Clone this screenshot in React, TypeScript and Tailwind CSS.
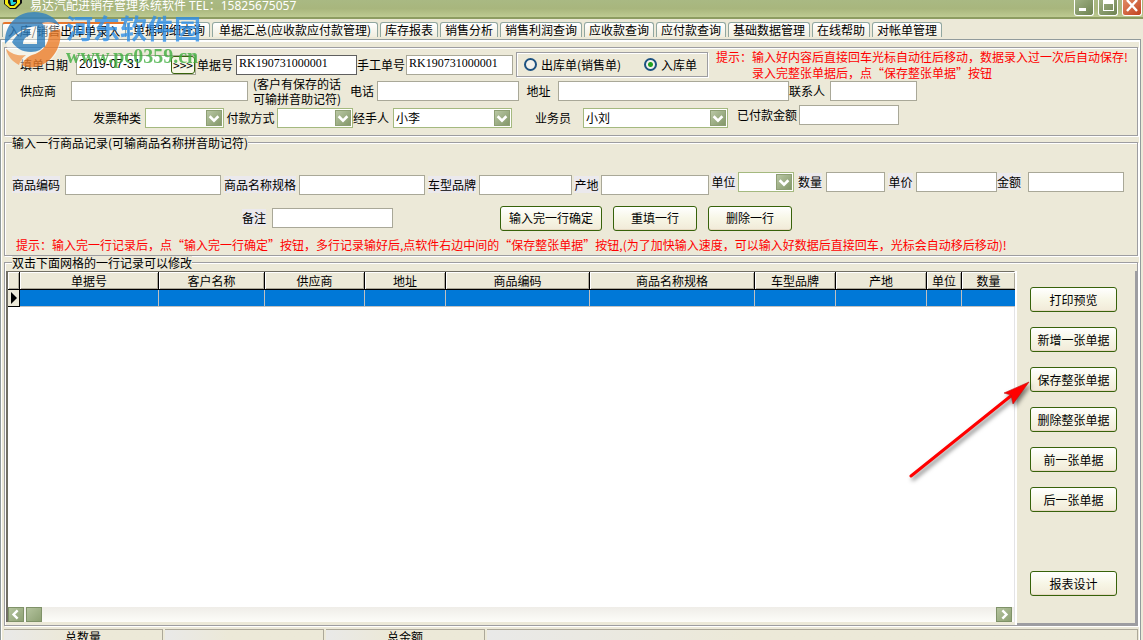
import React from 'react';
import clsx from 'clsx';

const TABS = [
    { name: '入库/销售出库单录入', width: 'w-[124px]' },
    { name: '单据明细查询', width: 'w-[82px]' },
    { name: '单据汇总(应收款应付款管理)', width: 'w-[166px]' },
    { name: '库存报表', width: 'w-[58px]' },
    { name: '销售分析', width: 'w-[58px]' },
    { name: '销售利润查询', width: 'w-[82px]' },
    { name: '应收款查询', width: 'w-[70px]' },
    { name: '应付款查询', width: 'w-[70px]' },
    { name: '基础数据管理', width: 'w-[82px]' },
    { name: '在线帮助', width: 'w-[58px]' },
    { name: '对帐单管理', width: 'w-[70px]' },
];

const COLUMNS = [
    { name: '单据号', width: 'w-[139px]' },
    { name: '客户名称', width: 'w-[106px]' },
    { name: '供应商', width: 'w-[100px]' },
    { name: '地址', width: 'w-[81px]' },
    { name: '商品编码', width: 'w-[144px]' },
    { name: '商品名称规格', width: 'w-[165px]' },
    { name: '车型品牌', width: 'w-[81px]' },
    { name: '产地', width: 'w-[91px]' },
    { name: '单位', width: 'w-[35px]' },
    { name: '数量', width: 'w-[53px]' },
];

const ACTIONS = ['打印预览', '新增一张单据', '保存整张单据', '删除整张单据', '前一张单据', '后一张单据'];

const ETCHED = 'border border-[#9d9da1] shadow-[1px_1px_0_#fff,inset_1px_1px_0_#fff]';

interface LabelProps {
    htmlFor: string;
    children: React.ReactNode;
    className?: string;
    tinted?: boolean;
}

function Label({ htmlFor, children, className, tinted }: LabelProps) {
    return (
        <label htmlFor={htmlFor} className={clsx('h-5 leading-5', className)}>
            <span className={clsx(tinted && 'bg-[#ebe9ed]')}>{children}</span>
        </label>
    );
}

function TextBox({ id, value = '', dark }: { id: string; value?: string; dark?: boolean }) {
    return (
        <input
            id={id}
            type="text"
            defaultValue={value}
            className={clsx(
                "h-5 w-full min-w-0 border bg-white px-0.5 pb-0.5 font-['Liberation_Serif','Noto_Sans_CJK_SC',serif] outline-none",
                dark ? 'border-[#5f5f5f]' : 'border-[#a9a898]'
            )}
        />
    );
}

function Chevron({ d }: { d: string }) {
    return (
        <svg viewBox="0 0 16 16" className="h-full w-full" fill="none" stroke="#fff" strokeWidth="3">
            <path d={d} />
        </svg>
    );
}

function SelectBox({ id, value = '' }: { id: string; value?: string }) {
    return (
        <div className="relative h-5">
            <select
                id={id}
                defaultValue={value}
                className="block h-5 w-full appearance-none border border-[#a4b97f] bg-white pr-5 pl-0.5 leading-4 outline-none"
            >
                <option value={value}>{value}</option>
            </select>
            <span className="pointer-events-none absolute top-0.5 right-0.5 h-4 w-4 border border-[#8e9f74] bg-linear-to-br from-[#b9c7a4] to-[#84986a]">
                <Chevron d="M3 6l5 5 5-5" />
            </span>
        </div>
    );
}

function PushButton({ children, className }: { children: React.ReactNode; className?: string }) {
    return (
        <button
            type="button"
            className={clsx(
                'h-[25px] rounded-[3px] border border-[#37620a] bg-linear-to-b from-white via-[#f7f6e6] to-[#f1ead8] whitespace-nowrap shadow-[inset_0_-1px_0_#e6d9c3]',
                className
            )}
        >
            {children}
        </button>
    );
}

function TitleBar() {
    const box = 'flex h-4 w-5 items-center justify-center rounded-b-[3px] border border-t-0 border-white';
    return (
        <header className="flex h-[19px] shrink-0 items-start overflow-hidden border-b-2 border-[#8d9c62] bg-linear-to-b from-[#a9b983] via-[#a8b67d] to-[#becb92] pl-1">
            <svg viewBox="0 0 18 12" className="h-3 w-[18px]">
                <path d="M0 0h18v3l-6 6H6L0 4z" fill="#111" />
                <path d="M1 0h15v3l-5 5H6L1 4z" fill="#f5ea14" />
                <path d="M4 0h9v3l-3 3H6L4 3z" fill="#111" />
                <path d="M6 0h3v2h3v1L9 5H7z" fill="#21d3e0" />
            </svg>
            <h1 className="ml-2 font-['Noto_Sans','Noto_Sans_CJK_SC',sans-serif] leading-3 whitespace-nowrap text-white">
                易达汽配进销存管理系统软件 TEL：15825675057
            </h1>
            <div className="ml-auto flex gap-1 pr-px">
                <button type="button" aria-label="最小化" className={clsx(box, 'bg-linear-to-br from-[#9fb184] to-[#6f8352]')}>
                    <svg viewBox="0 0 18 15" className="h-[15px] w-[18px]">
                        <path d="M4 8h7v3H4z" fill="#fff" />
                    </svg>
                </button>
                <button type="button" aria-label="最大化" className={clsx(box, 'bg-linear-to-br from-[#9fb184] to-[#6f8352]')}>
                    <svg viewBox="0 0 18 15" className="h-[15px] w-[18px]">
                        <path d="M4 0h11v11H4z M5 4v6h9V4z" fill="#fff" fillRule="evenodd" />
                    </svg>
                </button>
                <button type="button" aria-label="关闭" className={clsx(box, 'bg-linear-to-br from-[#e08a63] to-[#c2401b]')}>
                    <svg viewBox="0 0 18 15" className="h-[15px] w-[18px]">
                        <path d="M4 0l10 11M14 0L4 11" stroke="#fff" strokeWidth="2.4" />
                    </svg>
                </button>
            </div>
        </header>
    );
}

function Watermark() {
    return (
        <div className="pointer-events-none absolute top-2 left-1 flex gap-1 opacity-80" aria-hidden="true">
            <svg viewBox="0 0 58 62" className="h-[62px] w-[58px]">
                <circle cx="29" cy="32" r="27" fill="#fff" opacity=".55" />
                <path d="M1 36C0 17 13 4 30 4c12 0 21 5 26 14-6-4-12-5-18-3 3 3 3 6 3 9v15h-8V18C20 19 10 26 1 36z" fill="#2f80c0" />
                <path d="M8 34c4-7 10-12 18-13v6c-5 2-7 5-7 9h22c-2 5-7 8-14 8-9 0-15-4-19-10z" fill="#2f80c0" />
                <path d="M56 21c3 17-8 35-25 38-5 1-9 0-13-2 2-5 5-8 10-10 11-3 17-11 17-22 3-2 7-3 11-4z" fill="#ee7f2d" />
                <path d="M2 41c7 6 13 7 20 6-4 3-6 6-7 10C9 54 4 49 2 41z" fill="#f29b55" />
            </svg>
            <div>
                <p className="pt-0.5 text-[27px] leading-9 font-bold text-[#2f8fe6]">河东软件园</p>
                <p className="font-['Liberation_Serif',serif] text-[20px] leading-5 font-bold text-[#3fae3f]">www.pc0359.cn</p>
            </div>
        </div>
    );
}

function DocumentForm() {
    const radio =
        'h-[13px] w-[13px] appearance-none rounded-full border-2 border-[#1d5281] bg-[#f3f2ec] checked:bg-[radial-gradient(circle,#21a121_0_2px,#f3f2ec_3px)]';
    return (
        <section className={clsx('pt-1 pb-[7px]', ETCHED)}>
            <div className="grid grid-cols-[56px_121px_39px_121px_49px_107px_195px_1fr] grid-rows-[25px] items-center pl-[15px]">
                <Label htmlFor="date">填单日期</Label>
                <div className="flex h-5 w-[120px] border border-[#a9a898] bg-white">
                    <input
                        id="date"
                        type="text"
                        defaultValue="2019-07-31"
                        className="w-0 flex-1 pb-0.5 pl-0.5 font-['Liberation_Sans',sans-serif] outline-none"
                    />
                    <button type="button" className="w-6 rounded-[3px] border border-[#37620a] bg-[#f7f6e6] leading-4">
                        &gt;&gt;&gt;
                    </button>
                </div>
                <Label htmlFor="docNo">单据号</Label>
                <TextBox id="docNo" value="RK190731000001" dark />
                <Label htmlFor="manualNo">手工单号</Label>
                <TextBox id="manualNo" value="RK190731000001" />
                <div className={clsx('flex h-[25px] w-48 items-center justify-self-end pl-[7px]', ETCHED)}>
                    <label className="flex w-[120px] items-center gap-1">
                        <input type="radio" name="kind" className={radio} />
                        出库单(销售单)
                    </label>
                    <label className="flex items-center gap-1">
                        <input type="radio" name="kind" defaultChecked className={radio} />
                        入库单
                    </label>
                </div>
                <div className="pl-2 leading-4 text-[#ff0000]">
                    <p>提示：输入好内容后直接回车光标自动往后移动，数据录入过一次后自动保存!</p>
                    <p className="pl-9">录入完整张单据后，点“保存整张单据”按钮</p>
                </div>
            </div>
            <div className="grid grid-cols-[51px_177px_102px_27px_142px_39px_231px_41px_87px] grid-rows-[28px] items-center pl-[15px]">
                <Label htmlFor="supplier">供应商</Label>
                <TextBox id="supplier" />
                <p className="pl-[5px] leading-[15px]">
                    (客户有保存的话
                    <br />
                    可输拼音助记符)
                </p>
                <Label htmlFor="phone">电话</Label>
                <TextBox id="phone" />
                <Label htmlFor="address" className="text-center">地址</Label>
                <TextBox id="address" />
                <Label htmlFor="contact">联系人</Label>
                <TextBox id="contact" />
            </div>
            <div className="grid grid-cols-[52px_79px_53px_76px_40px_119px_71px_145px_71px_100px] grid-rows-[23px] items-end pl-[88px]">
                <Label htmlFor="invoice">发票种类</Label>
                <SelectBox id="invoice" />
                <Label htmlFor="payment" className="text-center">付款方式</Label>
                <SelectBox id="payment" />
                <Label htmlFor="handler">经手人</Label>
                <SelectBox id="handler" value="小李" />
                <Label htmlFor="sales" className="pr-3 text-right">业务员</Label>
                <SelectBox id="sales" value="小刘" />
                <Label htmlFor="paid" className="self-start pr-0.5 text-right">已付款金额</Label>
                <div className="flex self-start">
                    <TextBox id="paid" />
                </div>
            </div>
        </section>
    );
}

function LineForm() {
    return (
        <fieldset className={clsx('min-w-0 pb-0.5', ETCHED)}>
            <legend className="ml-[7px] h-[13px] bg-[#ece9d8] leading-[13px]">输入一行商品记录(可输商品名称拼音助记符)</legend>
            <div className="mt-[23px] flex h-[23px] pl-[7px]">
                <div className="grid grid-cols-[53px_156px_78px_126px_54px_93px_29px_108px] self-end">
                    <Label htmlFor="code" tinted>商品编码</Label>
                    <TextBox id="code" />
                    <Label htmlFor="spec" className="text-center" tinted>商品名称规格</Label>
                    <TextBox id="spec" />
                    <Label htmlFor="brand" className="text-center" tinted>车型品牌</Label>
                    <TextBox id="brand" />
                    <Label htmlFor="origin" className="text-center" tinted>产地</Label>
                    <TextBox id="origin" />
                </div>
                <div className="grid grid-cols-[29px_56px_32px_59px_31px_81px_31px_96px] self-start">
                    <Label htmlFor="unit" className="text-center" tinted>单位</Label>
                    <SelectBox id="unit" />
                    <Label htmlFor="qty" className="text-center" tinted>数量</Label>
                    <TextBox id="qty" />
                    <Label htmlFor="price" className="text-center" tinted>单价</Label>
                    <TextBox id="price" />
                    <Label htmlFor="amount" tinted>金额</Label>
                    <TextBox id="amount" />
                </div>
            </div>
            <div className="mt-2.5 flex h-[26px] items-center pl-[237px]">
                <Label htmlFor="remark" className="w-[30px]" tinted>备注</Label>
                <div className="flex w-[121px]">
                    <TextBox id="remark" />
                </div>
                <div className="ml-[107px] flex gap-[11px]">
                    <PushButton className="w-[102px]">输入完一行确定</PushButton>
                    <PushButton className="w-[84px]">重填一行</PushButton>
                    <PushButton className="w-[84px]">删除一行</PushButton>
                </div>
            </div>
            <p className="mt-1.5 pl-[11px] leading-4 text-[#ff0000]">
                提示：输入完一行记录后，点“输入完一行确定”按钮，多行记录输好后,点软件右边中间的“保存整张单据”按钮,(为了加快输入速度，可以输入好数据后直接回车，光标会自动移后移动)!
            </p>
        </fieldset>
    );
}

function ScrollBar() {
    const knob = 'h-[15px] w-4 border border-[#7f9268] bg-linear-to-br from-[#b4c39e] to-[#8ea174]';
    return (
        <div className="mt-auto flex h-[15px] gap-0.5 bg-linear-to-b from-[#efede8] to-[#fdfdf9] pr-0.5">
            <button type="button" aria-label="向左" className={knob}>
                <Chevron d="M10 3L5 8l5 5" />
            </button>
            <div className={knob} />
            <button type="button" aria-label="向右" className={clsx(knob, 'ml-auto')}>
                <Chevron d="M6 3l5 5-5 5" />
            </button>
        </div>
    );
}

function RecordGrid() {
    return (
        <div className="flex min-w-0 flex-1 flex-col border-t border-r border-l-2 border-[#716f64] border-r-[#e3e3e6] bg-white">
            <table className="w-full table-fixed border-separate border-spacing-0">
                <thead>
                    <tr className="h-[18px]">
                        <th className="w-3 border-r border-b border-black bg-[#ece9d8] p-0 shadow-[inset_1px_1px_0_#fff,inset_-1px_-1px_0_#aca899]" />
                        {COLUMNS.map((column) => (
                            <th
                                key={column.name}
                                className={clsx(
                                    'border-r border-b border-black bg-[#ece9d8] p-0 leading-4 font-normal whitespace-nowrap shadow-[inset_1px_1px_0_#fff,inset_-1px_-1px_0_#aca899] last:border-r-0',
                                    column.width
                                )}
                            >
                                {column.name}
                            </th>
                        ))}
                    </tr>
                </thead>
                <tbody>
                    <tr className="h-[17px]">
                        <td className="border-r border-b border-black bg-[#ece9d8] p-0">
                            <svg viewBox="0 0 11 15" className="block h-[15px] w-[11px]">
                                <path d="M3 1v12l6-6z" fill="#000" />
                            </svg>
                        </td>
                        {COLUMNS.map((column) => (
                            <td key={column.name} className="border-r border-b border-[#c0c0c0] bg-[#0078d7] p-0 last:border-r-0" />
                        ))}
                    </tr>
                </tbody>
            </table>
            <ScrollBar />
        </div>
    );
}

function Records() {
    return (
        <fieldset className={clsx('flex min-h-0 min-w-0 flex-1 flex-col', ETCHED)}>
            <legend className="ml-[7px] h-[13px] bg-[#ece9d8] leading-[13px]">双击下面网格的一行记录可以修改</legend>
            <div className="relative mt-0.5 flex min-h-0 flex-1">
                <div className="flex min-w-0 flex-1 border-r-2 border-white pb-[3px] pl-px">
                    <RecordGrid />
                </div>
                <aside className="flex w-[120px] shrink-0 flex-col gap-[15px] border-r-2 border-b-2 border-[#9d9da1] pt-4 pl-[13px]">
                    {ACTIONS.map((action) => (
                        <PushButton key={action} className="w-[87px] shrink-0">{action}</PushButton>
                    ))}
                    <PushButton className="mt-11 w-[87px] shrink-0">报表设计</PushButton>
                </aside>
                <svg viewBox="0 0 130 110" className="pointer-events-none absolute top-[105px] right-[103px] h-[110px] w-[130px] drop-shadow-[2px_3px_2px_rgba(0,0,0,0.5)]">
                    <path d="M7 100L108 19" stroke="#f00" strokeWidth="3" strokeLinecap="round" />
                    <path d="M125 6L100 17l7 2 2 9z" fill="#f00" stroke="#c01010" strokeWidth=".6" />
                </svg>
            </div>
        </fieldset>
    );
}

function StatusBar() {
    const cell = 'h-full border-t border-r border-[#aca899] bg-linear-to-r from-[#e9e9e8] to-[#ece9d8] to-40% text-center leading-[14px]';
    return (
        <footer className="mt-[3px] flex h-[11px] shrink-0 gap-0.5">
            <div className={clsx(cell, 'w-[159px]')}>总数量</div>
            <div className={clsx(cell, 'w-[159px]')} />
            <div className={clsx(cell, 'w-[159px]')}>总金额</div>
            <div className={clsx(cell, 'flex-1')} />
        </footer>
    );
}

export default function App() {
    return (
        <div className="relative flex h-screen flex-col overflow-hidden bg-[#ece9d8] font-['Noto_Sans_CJK_SC',sans-serif] text-xs whitespace-nowrap text-black">
            <TitleBar />
            <nav className="mt-[3px] mb-0.5 flex h-[15px] shrink-0 gap-0.5 pl-0.5">
                {TABS.map((tab, index) => (
                    <button
                        key={tab.name}
                        type="button"
                        className={clsx(
                            'shrink-0 rounded-t-[3px] border border-b-0 bg-linear-to-b from-white to-[#f1eedf] leading-3',
                            index === 0 ? 'border-t-2 border-[#91a7a0] border-t-[#e6762c]' : 'border-[#91a7a0]',
                            tab.width
                        )}
                    >
                        {tab.name}
                    </button>
                ))}
            </nav>
            <main className="mr-0.5 flex min-h-0 flex-1 flex-col border border-b-0 border-[#919b9c] pt-[7px] pr-0.5 pl-[3px] shadow-[inset_1px_2px_0_#fff,inset_-1px_0_0_#fff]">
                <DocumentForm />
                <LineForm />
                <Records />
                <StatusBar />
            </main>
            <Watermark />
        </div>
    );
}
